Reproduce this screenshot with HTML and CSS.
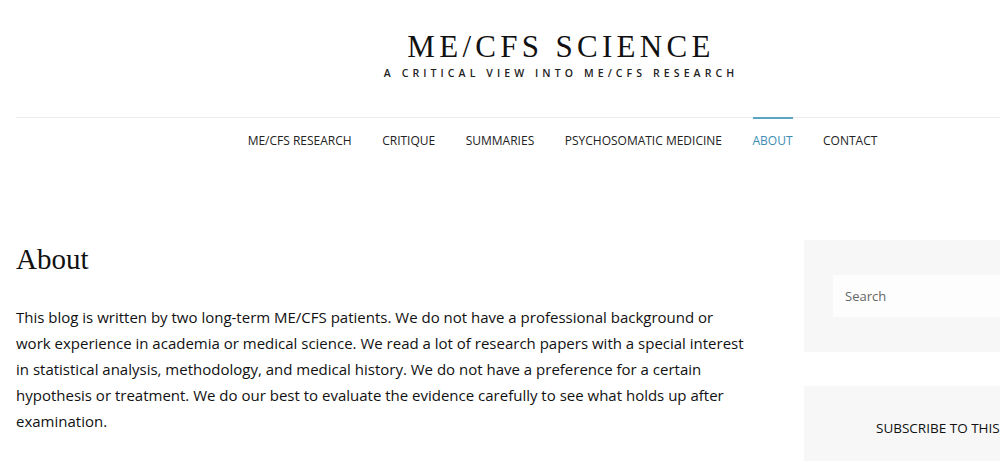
FILE: index.html
```html
<!DOCTYPE html>
<html>
<head>
<meta charset="utf-8">
<link rel="stylesheet" href="styles.css">
</head>
<body>
<div class="page">
  <header class="site-header">
    <div class="site-title">ME/CFS SCIENCE</div>
    <div class="site-tagline">A CRITICAL VIEW INTO ME/CFS RESEARCH</div>
  </header>
  <nav class="main-nav">
    <a class="nav-item">ME/CFS RESEARCH</a>
    <a class="nav-item">CRITIQUE</a>
    <a class="nav-item">SUMMARIES</a>
    <a class="nav-item">PSYCHOSOMATIC MEDICINE</a>
    <a class="nav-item active">ABOUT</a>
    <a class="nav-item">CONTACT</a>
  </nav>
  <div class="layout">
    <main class="content">
      <h1 class="page-title">About</h1>
      <p class="entry">This blog is written by two long-term ME/CFS patients. We do not have a professional background or work experience in academia or medical science. We read a lot of research papers with a special interest in statistical analysis, methodology, and medical history. We do not have a preference for a certain hypothesis or treatment. We do our best to evaluate the evidence carefully to see what holds up after examination.</p>
    </main>
    <aside class="sidebar">
      <div class="widget search-widget">
        <div class="search-box">Search</div>
      </div>
      <div class="widget subscribe-widget">
        <div class="widget-title">SUBSCRIBE TO THIS BLOG VIA EMAIL</div>
      </div>
    </aside>
  </div>
</div>
</body>
</html>
```

FILE: styles.css
```css
html, body {
  margin: 0;
  padding: 0;
  background: #fff;
  overflow: hidden;
}
.page {
  width: 1090px;
  margin-left: 16px;
}
.site-header {
  text-align: center;
  padding-top: 30px;
}
.site-title {
  font-family: "Liberation Serif", "DejaVu Serif", serif;
  font-size: 31px;
  line-height: 34px;
  letter-spacing: 4.3px;
  color: #111;
}
.site-tagline {
  font-family: "Open Sans", sans-serif;
  font-weight: 600;
  font-size: 10.5px;
  line-height: 14px;
  letter-spacing: 4.1px;
  color: #222;
  margin-top: 2px;
}
.main-nav {
  margin-top: 37px;
  border-top: 1px solid #ececec;
  display: flex;
  justify-content: center;
  gap: 30.5px;
  padding-left: 3px;
}
.nav-item {
  font-family: "Open Sans", sans-serif;
  font-size: 12px;
  color: #222;
  padding-top: 13px;
  line-height: 17px;
  border-top: 2px solid transparent;
  margin-top: -1px;
}
.nav-item.active {
  color: #3c8db4;
  border-top-color: #5ba4c2;
}
.layout {
  display: flex;
  margin-top: 91px;
  gap: 53px;
}
.content {
  width: 735px;
  flex: none;
}
.page-title {
  font-family: "Liberation Serif", "DejaVu Serif", serif;
  font-weight: normal;
  font-size: 29px;
  line-height: 36px;
  margin: 0;
  padding-top: 1px;
  color: #111;
}
.entry {
  font-family: "Open Sans", sans-serif;
  font-size: 15px;
  line-height: 26px;
  color: #111;
  margin: 27px 0 0;
}
.sidebar {
  flex: 1;
  display: flex;
  flex-direction: column;
  gap: 34px;
}
.widget {
  background: #f7f7f7;
  padding: 35px 29px;
}
.search-box {
  background: #fdfdfd;
  height: 42px;
  line-height: 42px;
  padding-left: 12px;
  font-family: "Open Sans", sans-serif;
  font-size: 13px;
  color: #666;
}
.subscribe-widget {
  padding: 33px 0 35px 72px;
}
.widget-title {
  font-family: "Open Sans", sans-serif;
  font-size: 13.5px;
  color: #111;
  line-height: 18px;
  white-space: nowrap;
}
```
